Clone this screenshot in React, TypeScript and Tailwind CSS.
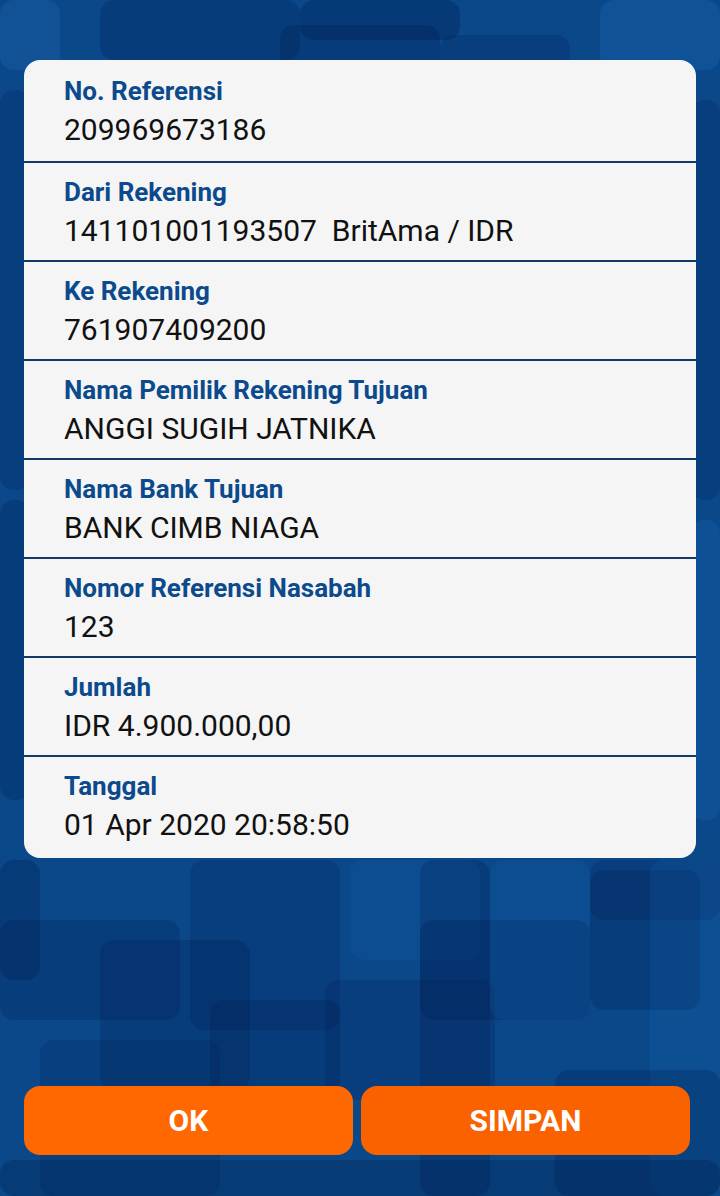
import React from "react";

const rows: { label: string; value: string }[] = [
  { label: "No. Referensi", value: "209969673186" },
  { label: "Dari Rekening", value: "141101001193507\u00a0\u00a0BritAma / IDR" },
  { label: "Ke Rekening", value: "761907409200" },
  { label: "Nama Pemilik Rekening Tujuan", value: "ANGGI SUGIH JATNIKA" },
  { label: "Nama Bank Tujuan", value: "BANK CIMB NIAGA" },
  { label: "Nomor Referensi Nasabah", value: "123" },
  { label: "Jumlah", value: "IDR 4.900.000,00" },
  { label: "Tanggal", value: "01 Apr 2020 20:58:50" },
];

// decorative background tiles: [x, y, w, h, color]
const tiles: [number, number, number, number, string][] = [
  [0, 0, 60, 70, "rgba(40,110,190,0.25)"],
  [100, 0, 200, 60, "rgba(0,25,75,0.25)"],
  [300, 0, 160, 40, "rgba(0,25,75,0.30)"],
  [280, 25, 160, 50, "rgba(0,25,75,0.25)"],
  [440, 35, 130, 40, "rgba(0,25,75,0.20)"],
  [600, 0, 120, 70, "rgba(30,110,190,0.25)"],
  [0, 90, 30, 400, "rgba(0,25,75,0.20)"],
  [690, 100, 30, 400, "rgba(0,25,75,0.20)"],
  [0, 500, 30, 300, "rgba(0,25,75,0.25)"],
  [690, 520, 30, 300, "rgba(30,110,190,0.22)"],
  [0, 860, 40, 120, "rgba(0,25,75,0.28)"],
  [0, 920, 180, 100, "rgba(0,25,75,0.22)"],
  [100, 940, 150, 150, "rgba(0,25,75,0.22)"],
  [190, 860, 150, 170, "rgba(0,25,75,0.20)"],
  [210, 1000, 130, 110, "rgba(0,25,75,0.24)"],
  [325, 980, 170, 120, "rgba(0,25,75,0.20)"],
  [350, 860, 130, 100, "rgba(20,100,180,0.18)"],
  [420, 860, 70, 336, "rgba(0,25,75,0.24)"],
  [420, 920, 170, 100, "rgba(0,25,75,0.24)"],
  [490, 860, 100, 160, "rgba(30,110,190,0.15)"],
  [590, 860, 130, 60, "rgba(0,25,75,0.20)"],
  [590, 870, 110, 140, "rgba(0,25,75,0.22)"],
  [650, 860, 70, 336, "rgba(30,110,190,0.18)"],
  [555, 1070, 165, 126, "rgba(0,25,75,0.24)"],
  [0, 1160, 720, 36, "rgba(0,20,60,0.25)"],
  [40, 1040, 180, 156, "rgba(0,25,75,0.16)"],
];

export default function App() {
  return (
    <div
      className="relative w-[720px] h-[1196px] overflow-hidden bg-[#0a488a]"
      style={{ fontFamily: "Roboto, 'Noto Sans', sans-serif" }}
    >
      <div className="absolute inset-0">
        {tiles.map(([x, y, w, h, c], i) => (
          <div
            key={i}
            className="absolute rounded-[14px]"
            style={{ left: x, top: y, width: w, height: h, background: c }}
          />
        ))}
      </div>

      <div className="relative flex flex-col h-full">
        <div className="mt-[60px] ml-[24px] w-[672px] h-[798px] bg-[#f5f5f5] rounded-[16px] overflow-hidden flex flex-col">
          {rows.map((r, i) => (
            <div
              key={i}
              className={
                i === 0
                  ? "h-[101px] pl-[40px] pt-[16px] flex flex-col"
                  : i === rows.length - 1
                  ? "flex-1 border-t-2 border-[#143868] pl-[40px] pt-[14px] flex flex-col"
                  : "h-[99px] border-t-2 border-[#143868] pl-[40px] pt-[14px] flex flex-col"
              }
            >
              <div className="text-[26px] leading-[30px] font-bold text-[#0b4a8c]">
                {r.label}
              </div>
              <div className="mt-[4px] text-[30px] leading-[40px] text-[#111111]">
                {r.value}
              </div>
            </div>
          ))}
        </div>

        <div className="mt-auto mb-[41px] pl-[24px] pr-[30px] flex gap-[8px]">
          <div className="flex-1 h-[69px] rounded-[16px] bg-[#ff6800] flex items-center justify-center text-white font-bold text-[30px]">
            OK
          </div>
          <div className="flex-1 h-[69px] rounded-[16px] bg-[#fa6200] flex items-center justify-center text-white font-bold text-[30px]">
            SIMPAN
          </div>
        </div>
      </div>
    </div>
  );
}
